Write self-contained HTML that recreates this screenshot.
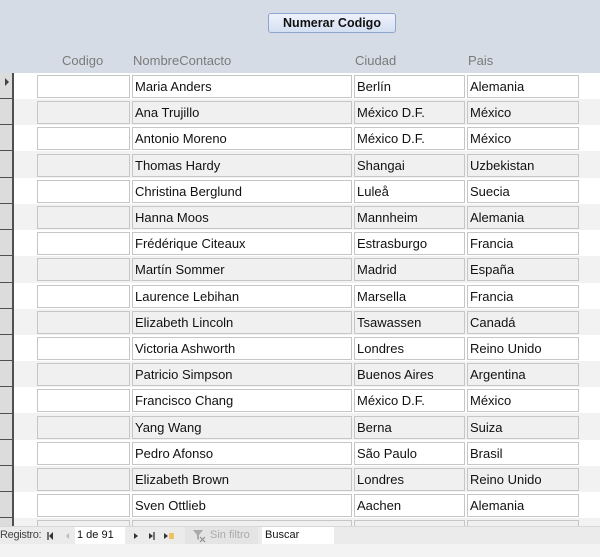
<!DOCTYPE html>
<html><head><meta charset="utf-8"><style>
*{margin:0;padding:0;box-sizing:border-box}
body{width:600px;height:557px;overflow:hidden;background:#f2f2f2;font-family:"Liberation Sans",sans-serif;position:relative}
.hdr{position:absolute;left:0;top:0;width:600px;height:73px;background:#d6dce5}
.btn{position:absolute;left:268px;top:13px;width:128px;height:20px;border:1px solid #8ea6cf;border-radius:3px;background:linear-gradient(#eef2fb,#d5e0f3);font-weight:bold;font-size:12.5px;text-align:center;line-height:18px;color:#111}
.lbl{position:absolute;top:53px;font-size:13px;color:#7a7a7a}
.row{position:absolute;left:0;width:600px;height:26px}
.row.a{background:#fff}.row.b{background:#f2f2f2}
.sel{position:absolute;left:0;width:14px;height:26px;background:#dcdcdc;border-right:2px solid #505050;border-bottom:1px solid #505050}
.f{position:absolute;top:2px;height:23px;border:1px solid #c6c6c6;font-size:13px;line-height:21px;padding-left:2px;color:#111;white-space:nowrap;overflow:hidden}
.a .f{background:#fff}.b .f{background:#f0f0f0}
.c1{left:37px;width:93px}.c2{left:132px;width:220px}.c3{left:354px;width:111px}.c4{left:467px;width:112px}
.nav{position:absolute;left:0;top:526px;width:600px;height:18px;background:#ebebeb;border-top:1px solid #d8d8d8;font-size:11px;color:#444}
.nav span{position:absolute;top:2px}
.foot{position:absolute;left:0;top:544px;width:600px;height:13px;background:#f3f3f3}
</style></head><body>
<div class="hdr"></div>
<div class="btn">Numerar Codigo</div>
<div class="lbl" style="left:62px">Codigo</div>
<div class="lbl" style="left:133px">NombreContacto</div>
<div class="lbl" style="left:355px">Ciudad</div>
<div class="lbl" style="left:468px">Pais</div>

<div class="row a" style="top:73px"><div class="f c1"></div><div class="f c2">Maria Anders</div><div class="f c3">Berlín</div><div class="f c4">Alemania</div></div>
<div class="row b" style="top:99px"><div class="f c1"></div><div class="f c2">Ana Trujillo</div><div class="f c3">México D.F.</div><div class="f c4">México</div></div>
<div class="row a" style="top:125px"><div class="f c1"></div><div class="f c2">Antonio Moreno</div><div class="f c3">México D.F.</div><div class="f c4">México</div></div>
<div class="row b" style="top:152px"><div class="f c1"></div><div class="f c2">Thomas Hardy</div><div class="f c3">Shangai</div><div class="f c4">Uzbekistan</div></div>
<div class="row a" style="top:178px"><div class="f c1"></div><div class="f c2">Christina Berglund</div><div class="f c3">Luleå</div><div class="f c4">Suecia</div></div>
<div class="row b" style="top:204px"><div class="f c1"></div><div class="f c2">Hanna Moos</div><div class="f c3">Mannheim</div><div class="f c4">Alemania</div></div>
<div class="row a" style="top:230px"><div class="f c1"></div><div class="f c2">Frédérique Citeaux</div><div class="f c3">Estrasburgo</div><div class="f c4">Francia</div></div>
<div class="row b" style="top:256px"><div class="f c1"></div><div class="f c2">Martín Sommer</div><div class="f c3">Madrid</div><div class="f c4">España</div></div>
<div class="row a" style="top:283px"><div class="f c1"></div><div class="f c2">Laurence Lebihan</div><div class="f c3">Marsella</div><div class="f c4">Francia</div></div>
<div class="row b" style="top:309px"><div class="f c1"></div><div class="f c2">Elizabeth Lincoln</div><div class="f c3">Tsawassen</div><div class="f c4">Canadá</div></div>
<div class="row a" style="top:335px"><div class="f c1"></div><div class="f c2">Victoria Ashworth</div><div class="f c3">Londres</div><div class="f c4">Reino Unido</div></div>
<div class="row b" style="top:361px"><div class="f c1"></div><div class="f c2">Patricio Simpson</div><div class="f c3">Buenos Aires</div><div class="f c4">Argentina</div></div>
<div class="row a" style="top:387px"><div class="f c1"></div><div class="f c2">Francisco Chang</div><div class="f c3">México D.F.</div><div class="f c4">México</div></div>
<div class="row b" style="top:414px"><div class="f c1"></div><div class="f c2">Yang Wang</div><div class="f c3">Berna</div><div class="f c4">Suiza</div></div>
<div class="row a" style="top:440px"><div class="f c1"></div><div class="f c2">Pedro Afonso</div><div class="f c3">São Paulo</div><div class="f c4">Brasil</div></div>
<div class="row b" style="top:466px"><div class="f c1"></div><div class="f c2">Elizabeth Brown</div><div class="f c3">Londres</div><div class="f c4">Reino Unido</div></div>
<div class="row a" style="top:492px"><div class="f c1"></div><div class="f c2">Sven Ottlieb</div><div class="f c3">Aachen</div><div class="f c4">Alemania</div></div>
<div class="row b" style="top:518px"><div class="f c1"></div><div class="f c2"></div><div class="f c3"></div><div class="f c4"></div></div>

<div class="sel" style="top:73px"><svg width="12" height="26" style="position:absolute;left:1px;top:0"><path d="M4 5 L8 9 L4 13Z" fill="#444"/></svg></div>
<div class="sel" style="top:99px"></div><div class="sel" style="top:125px"></div><div class="sel" style="top:151px;height:27px"></div>
<div class="sel" style="top:178px"></div><div class="sel" style="top:204px"></div><div class="sel" style="top:230px"></div>
<div class="sel" style="top:256px;height:27px"></div><div class="sel" style="top:283px"></div><div class="sel" style="top:309px"></div>
<div class="sel" style="top:335px"></div><div class="sel" style="top:361px"></div><div class="sel" style="top:387px;height:27px"></div>
<div class="sel" style="top:414px"></div><div class="sel" style="top:440px"></div><div class="sel" style="top:466px"></div>
<div class="sel" style="top:492px"></div><div class="sel" style="top:518px"></div>

<div class="nav">
<span style="left:0;letter-spacing:-0.3px">Registro:</span>
<svg width="30" height="16" style="position:absolute;left:45px;top:1px"><path d="M3 4v8" stroke="#333" stroke-width="1.3"/><path d="M4 8l4-4v8z" fill="#333"/><path d="M21 8l3-3v6z" fill="#bbb"/></svg>
<div style="position:absolute;left:75px;top:0;width:50px;height:17px;background:#fff"></div>
<span style="left:77px;color:#111">1 de 91</span>
<svg width="60" height="16" style="position:absolute;left:128px;top:1px"><path d="M6 5l4 3-4 3z" fill="#333"/><path d="M21 5l4 3-4 3z" fill="#333"/><path d="M26 4v8" stroke="#333" stroke-width="1.3"/><path d="M36 5l4 3-4 3z" fill="#333"/><rect x="41" y="5" width="5" height="6" fill="#f2c060"/></svg>
<div style="position:absolute;left:185px;top:0;width:73px;height:17px;background:#e4e4e4"></div>
<svg width="20" height="16" style="position:absolute;left:191px;top:1px"><path d="M2 2h10l-4 5v5l-2-1v-4z" fill="#aaa"/><path d="M9 9l5 5M14 9l-5 5" stroke="#888"/></svg>
<span style="left:210px;color:#aaa">Sin filtro</span>
<div style="position:absolute;left:262px;top:0;width:72px;height:17px;background:#fff"></div>
<span style="left:265px;color:#111">Buscar</span>
</div>
<div class="foot"></div>
</body></html>
